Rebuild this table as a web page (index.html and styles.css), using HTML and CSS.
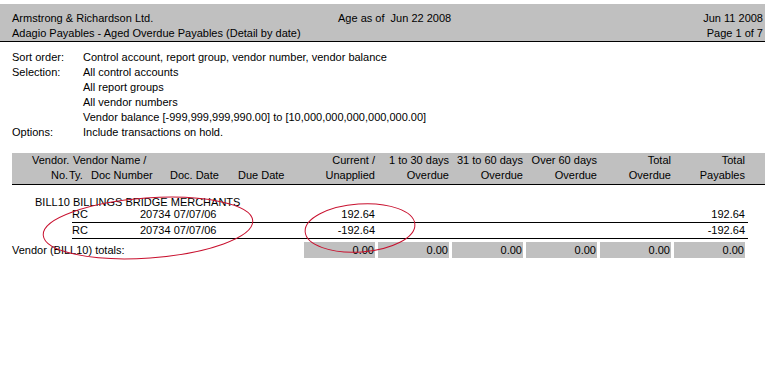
FILE: index.html
```html
<!DOCTYPE html>
<html>
<head>
<meta charset="utf-8">
<link rel="stylesheet" href="styles.css">
</head>
<body>
<div class="hdr">
  <div class="hrow"><span>Armstrong &amp; Richardson Ltd.</span><span>Age as of&nbsp; Jun 22 2008</span><span class="r">Jun 11 2008</span></div>
  <div class="hrow"><span>Adagio Payables - Aged Overdue Payables (Detail by date)</span><span></span><span class="r">Page 1 of 7</span></div>
</div>

<div class="sel">
  <div>Sort order:</div><div>Control account, report group, vendor number, vendor balance</div>
  <div>Selection:</div><div>All control accounts</div>
  <div></div><div>All report groups</div>
  <div></div><div>All vendor numbers</div>
  <div></div><div>Vendor balance [-999,999,999,990.00] to [10,000,000,000,000,000.00]</div>
  <div>Options:</div><div>Include transactions on hold.</div>
</div>

<div class="colhdr">
  <div class="chrow">
    <div class="left"><span class="c-vend">Vendor.</span><span>Vendor Name /</span></div>
    <div class="num">Current /</div>
    <div class="num">1 to 30 days</div>
    <div class="num">31 to 60 days</div>
    <div class="num">Over 60 days</div>
    <div class="num">Total</div>
    <div class="num">Total</div>
  </div>
  <div class="chrow">
    <div class="left"><span class="c-no">No.</span><span class="c-ty">Ty.</span><span class="c-doc">Doc Number</span><span class="c-date">Doc. Date</span><span>Due Date</span></div>
    <div class="num">Unapplied</div>
    <div class="num">Overdue</div>
    <div class="num">Overdue</div>
    <div class="num">Overdue</div>
    <div class="num">Overdue</div>
    <div class="num">Payables</div>
  </div>
</div>

<div class="vendor">BILL10 BILLINGS BRIDGE MERCHANTS</div>

<div class="drow">
  <div class="dleft"><span class="ty">RC</span><span>20734 07/07/06</span></div>
  <div class="num">192.64</div>
  <div class="num"></div>
  <div class="num"></div>
  <div class="num"></div>
  <div class="num"></div>
  <div class="num">192.64</div>
</div>
<div class="drow">
  <div class="dleft"><span class="ty">RC</span><span>20734 07/07/06</span></div>
  <div class="num">-192.64</div>
  <div class="num"></div>
  <div class="num"></div>
  <div class="num"></div>
  <div class="num"></div>
  <div class="num">-192.64</div>
</div>

<div class="totals">
  <div class="tlabel">Vendor (BILL10) totals:</div>
  <div class="box">0.00</div>
  <div class="box">0.00</div>
  <div class="box">0.00</div>
  <div class="box">0.00</div>
  <div class="box">0.00</div>
  <div class="box">0.00</div>
</div>

<svg class="marks" width="765" height="384" viewBox="0 0 765 384">
  <ellipse cx="148" cy="228" rx="105" ry="30" transform="rotate(-4 148 228)" fill="none" stroke="#c8102e" stroke-width="1"/>
  <ellipse cx="360" cy="228" rx="55" ry="24" transform="rotate(-4 360 228)" fill="none" stroke="#c8102e" stroke-width="1"/>
</svg>
</body>
</html>
```

FILE: styles.css
```css
html, body {
  margin: 0;
  padding: 0;
  background: #fff;
}
body {
  font-family: "Liberation Sans", Arial, sans-serif;
  font-size: 11px;
  color: #000;
  width: 765px;
  height: 384px;
  position: relative;
  overflow: hidden;
}
.hdr {
  margin-top: 4px;
  background: #c0c0c0;
  padding: 7px 2px 0 12px;
  border-bottom: 1px solid #000;
}
.hrow {
  display: grid;
  grid-template-columns: 326px 1fr auto;
  line-height: 15px;
  white-space: nowrap;
}
.hrow .r { text-align: right; }

.sel {
  display: grid;
  grid-template-columns: 71px auto;
  margin: 8px 0 0 12px;
  line-height: 15px;
  white-space: nowrap;
}

.colhdr {
  margin: 13px 0 0 12px;
  background: #c0c0c0;
  border-bottom: 1px solid #000;
  padding-bottom: 1px;
}
.chrow {
  display: grid;
  grid-template-columns: 292px repeat(6, 74px);
  line-height: 15px;
  white-space: nowrap;
}
.num {
  text-align: right;
  padding-right: 3px;
}
.left { display: flex; }
.c-vend { margin-left: 20px; width: 41px; }
.c-no { margin-left: 39px; width: 18px; }
.c-ty { width: 22px; }
.c-doc { width: 79px; }
.c-date { width: 68px; }

.vendor {
  margin: 13px 0 0 35px;
  line-height: 9px;
  white-space: nowrap;
}
.drow {
  display: grid;
  grid-template-columns: 232px repeat(6, 74px);
  margin-left: 72px;
  width: 676px;
  line-height: 15px;
  border-bottom: 1px solid #000;
  white-space: nowrap;
}
.dleft { display: flex; }
.ty { width: 68px; }

.totals {
  display: grid;
  grid-template-columns: 292px repeat(6, 74px);
  margin: 3px 0 0 12px;
  line-height: 16px;
  white-space: nowrap;
}
.box {
  background: #c0c0c0;
  margin-right: 3px;
  padding-right: 1px;
  text-align: right;
}
.marks {
  position: absolute;
  left: 0;
  top: 0;
  pointer-events: none;
}
```
